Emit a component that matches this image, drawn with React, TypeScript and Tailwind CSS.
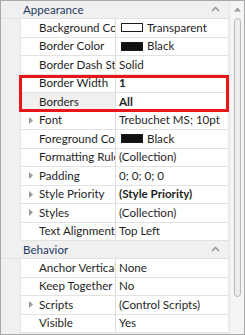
import React from "react";

type Row = {
  name: string;
  value: string;
  bold?: boolean;
  swatch?: "white" | "black";
  expand?: boolean;
  selected?: boolean;
};

const appearance: Row[] = [
  { name: "Background Color", value: "Transparent", swatch: "white" },
  { name: "Border Color", value: "Black", swatch: "black" },
  { name: "Border Dash Style", value: "Solid" },
  { name: "Border Width", value: "1", bold: true },
  { name: "Borders", value: "All", bold: true, selected: true },
  { name: "Font", value: "Trebuchet MS; 10pt", expand: true },
  { name: "Foreground Color", value: "Black", swatch: "black" },
  { name: "Formatting Rules", value: "(Collection)" },
  { name: "Padding", value: "0; 0; 0; 0", expand: true },
  { name: "Style Priority", value: "(Style Priority)", bold: true, expand: true },
  { name: "Styles", value: "(Collection)", expand: true },
  { name: "Text Alignment", value: "Top Left" },
];

const behavior: Row[] = [
  { name: "Anchor Vertically", value: "None" },
  { name: "Keep Together", value: "No" },
  { name: "Scripts", value: "(Control Scripts)", expand: true },
  { name: "Visible", value: "Yes" },
];

function Category({ title }: { title: string }) {
  return (
    <div className="h-[18px] flex items-center pl-[22px] pr-[8px] text-[#1e3a60] border-b border-[#e2e2e2]">
      <span className="flex-1">{title}</span>
      <svg width="9" height="6" viewBox="0 0 9 6" className="mb-[1px]">
        <polyline points="1,5 4.5,1.5 8,5" fill="none" stroke="#8a8a8a" strokeWidth="1.3" />
      </svg>
    </div>
  );
}

function PropRow({ row }: { row: Row }) {
  return (
    <div className="ml-[19px] h-[18.5px] flex border-b border-l border-[#e2e2e2] bg-white">
      <div
        className={`w-[95px] shrink-0 flex items-center overflow-hidden whitespace-nowrap border-r border-[#dcdcdc] ${
          row.selected ? "bg-[#f0f0f0]" : "bg-white"
        }`}
      >
        <span className="w-[18px] shrink-0 flex justify-center pl-[2px]">
          {row.expand && (
            <svg width="4" height="7" viewBox="0 0 4 7">
              <polygon points="0,0 4,3.5 0,7" fill="#9a9a9a" />
            </svg>
          )}
        </span>
        <span className="text-[#1f1f1f]">{row.name}</span>
      </div>
      <div className="flex-1 flex items-center pl-[3px] whitespace-nowrap overflow-hidden text-[#1f1f1f]">
        {row.swatch && (
          <span
            className={`w-[22px] h-[9px] mr-[4px] ml-[2px] border border-[#1a1a1a] ${
              row.swatch === "black" ? "bg-[#111111]" : "bg-white"
            }`}
          />
        )}
        <span className={row.bold ? "font-bold" : ""}>{row.value}</span>
      </div>
    </div>
  );
}

export default function App() {
  return (
    <div
      className="relative w-[245px] h-[335px] overflow-hidden bg-[#f0f0f0] border border-[#a8a8a8] flex text-[11.6px] leading-none"
      style={{ fontFamily: 'Lato, "Noto Sans", sans-serif' }}
    >
      <div className="w-[227px] shrink-0 flex flex-col">
        <Category title="Appearance" />
        {appearance.map((r) => (
          <PropRow key={r.name} row={r} />
        ))}
        <Category title="Behavior" />
        {behavior.map((r) => (
          <PropRow key={r.name} row={r} />
        ))}
      </div>

      {/* scrollbar */}
      <div className="flex-1 flex flex-col items-center bg-[#f5f5f5] border-l border-[#e4e4e4] ml-[1px]">
        <svg width="7" height="5" viewBox="0 0 7 5" className="mt-[6px]">
          <polygon points="0,4.5 3.5,0.5 7,4.5" fill="#9a9a9a" />
        </svg>
        <div className="mt-[6px] w-[7px] h-[279px] rounded-full border border-[#b9b9b9] bg-[#ececec]" />
      </div>

      {/* highlight annotation */}
      <div className="absolute left-[18px] top-[74px] w-[210px] h-[37px] border-[3px] border-[#e8161b] pointer-events-none" />
    </div>
  );
}
